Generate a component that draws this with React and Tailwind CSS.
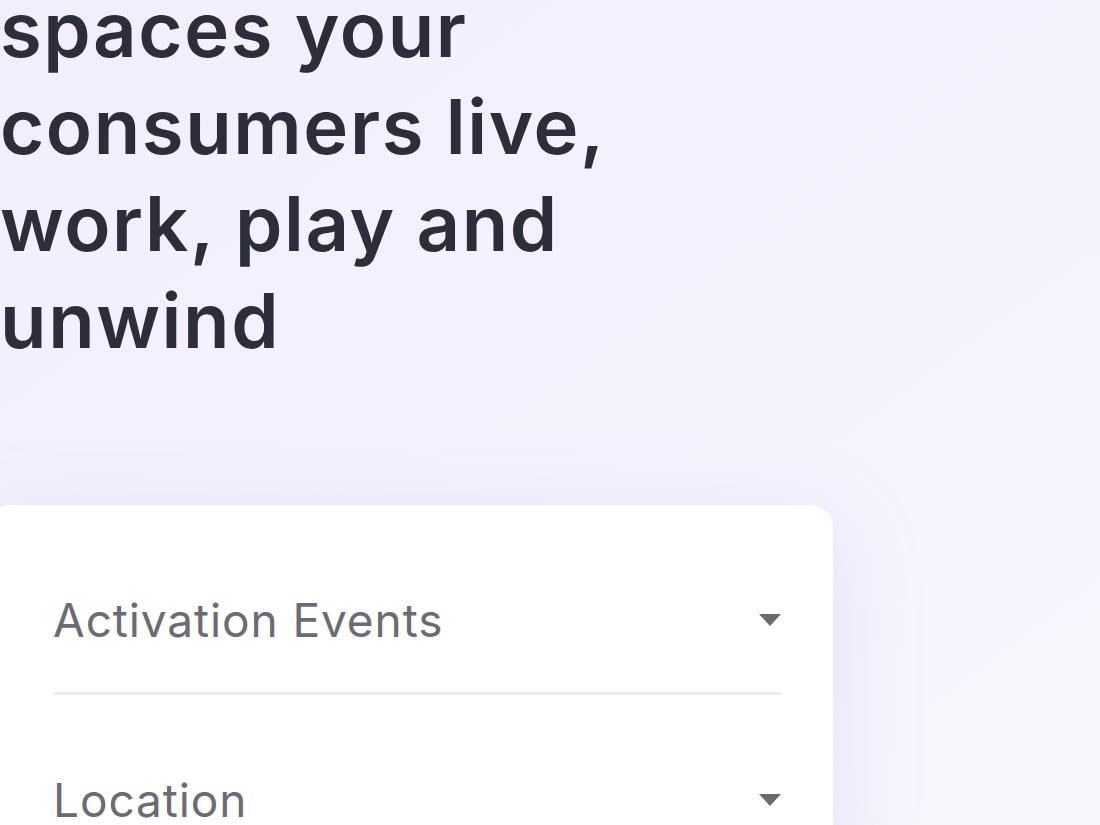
import React from 'react';

const fields = ['Activation Events', 'Location'];

function Caret() {
  return (
    <svg width="22" height="12" viewBox="0 0 22 12" className="shrink-0">
      <path d="M0 0 L22 0 L11 12 Z" fill="#6b6a72" />
    </svg>
  );
}

export default function App() {
  return (
    <div className="w-[1100px] h-[825px] overflow-hidden bg-gradient-to-br from-[#f3eefc] via-[#f5f1fd] to-[#f8f6fd]">
      {/* Hero headline */}
      <h1
        className="mt-[-19px] w-[700px] text-[76px] leading-[97px] font-semibold tracking-[1.6px] text-[#2c2e3b]"
        style={{ fontFamily: 'Inter, "Noto Sans", sans-serif' }}
      >
        spaces your consumers live, work, play and unwind
      </h1>

      {/* Search card */}
      <div
        className="mt-[136px] ml-[-12px] w-[845px] rounded-[22px] bg-white pt-[10px] pl-[65px] pr-[52px] shadow-[0_24px_90px_rgba(170,150,230,0.22)]"
        style={{ fontFamily: 'Inter, "Noto Sans", sans-serif' }}
      >
        {fields.map((label) => (
          <div
            key={label}
            className="flex items-center justify-between pt-[83px] pb-[50px] border-b-[3px] border-[#ecebf1]"
          >
            <span className="text-[46px] leading-[44px] text-[#6c6b75] tracking-[0.9px]">{label}</span>
            <Caret />
          </div>
        ))}
      </div>
    </div>
  );
}
